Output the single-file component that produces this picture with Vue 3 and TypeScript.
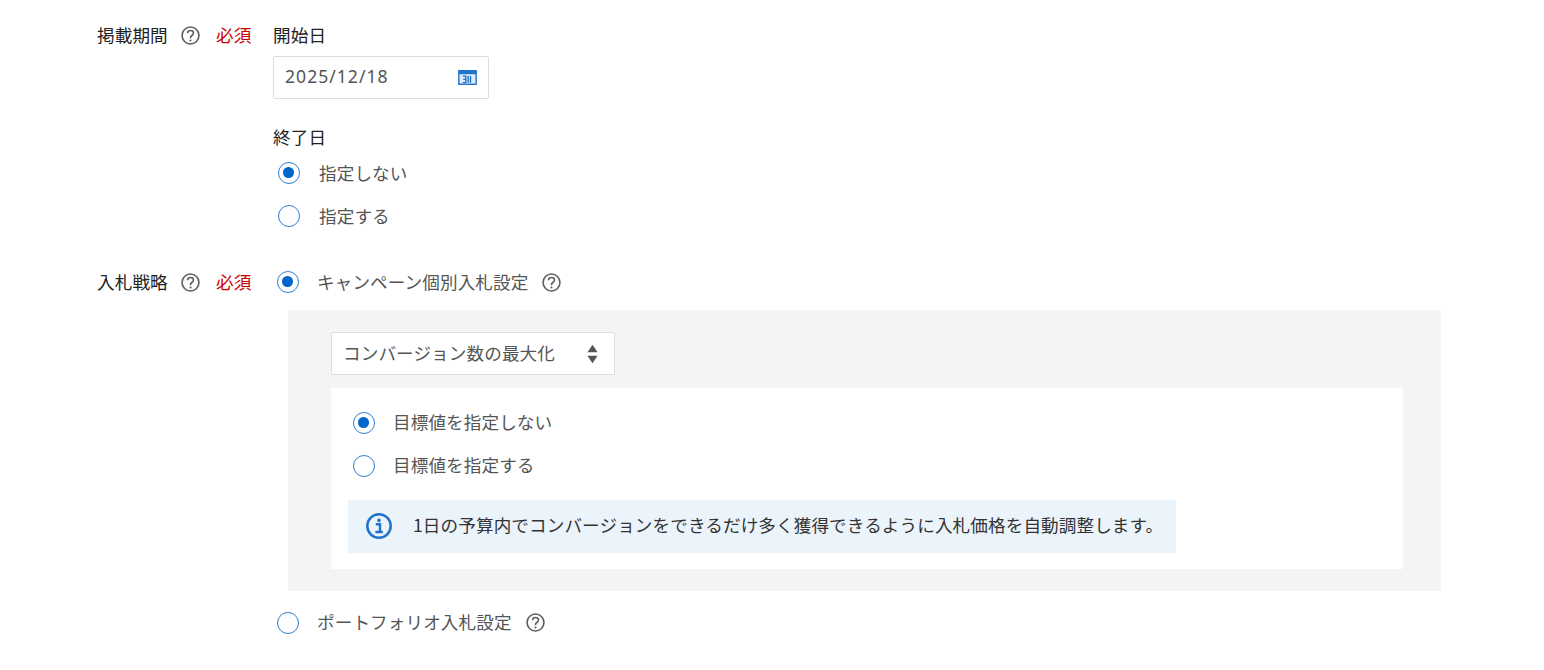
<script setup lang="ts">
const helpPath = 'M6.9 7.7c0-1.9 1.3-3 3.1-3s3.1 1.1 3.1 2.7c0 1.4-.8 2-1.7 2.6-.9.6-1.4 1.2-1.4 2.3v.5'
</script>

<template>
  <div class="page">
    <section class="row first">
      <div class="label">
        <span class="name">掲載期間</span>
        <svg class="help" viewBox="0 0 20 20"><circle cx="10" cy="10" r="8.9" /><path :d="helpPath" /><circle class="dot" cx="10" cy="15.2" r="1.1" /></svg>
        <span class="req">必須</span>
      </div>
      <div class="field">
        <div class="sub">開始日</div>
        <div class="date">
          <span class="date-text">2025/12/18</span>
          <svg class="cal" viewBox="0 0 20 16">
            <rect x="0" y="0" width="20" height="16" fill="#1f73c9" />
            <rect x="1.5" y="4.5" width="17" height="10" fill="#dcebfa" />
            <path d="M5 6.5h3.2v7H5M5.4 10h2.8M10.7 6.5v7M13.2 6.5v7" fill="none" stroke="#1f73c9" stroke-width="1.5" />
          </svg>
        </div>
        <div class="sub end">終了日</div>
        <label class="radio end-radio"><span class="mark on"></span><span class="txt gap31">指定しない</span></label>
        <label class="radio end-radio second"><span class="mark"></span><span class="txt gap31">指定する</span></label>
      </div>
    </section>

    <section class="row strategy">
      <div class="label">
        <span class="name">入札戦略</span>
        <svg class="help" viewBox="0 0 20 20"><circle cx="10" cy="10" r="8.9" /><path :d="helpPath" /><circle class="dot" cx="10" cy="15.2" r="1.1" /></svg>
        <span class="req">必須</span>
      </div>
      <div class="field">
        <label class="radio top">
          <span class="mark on"></span>
          <span class="txt">キャンペーン個別入札設定</span>
          <svg class="help after" viewBox="0 0 20 20"><circle cx="10" cy="10" r="8.9" /><path :d="helpPath" /><circle class="dot" cx="10" cy="15.2" r="1.1" /></svg>
        </label>
        <div class="panel">
          <div class="select">
            <span class="select-text">コンバージョン数の最大化</span>
            <svg class="updown" viewBox="0 0 12 20"><path d="M6 0l5.5 8H.5zM6 20L.5 12h11z" /></svg>
          </div>
          <div class="card">
            <label class="radio inner"><span class="mark on"></span><span class="txt">目標値を指定しない</span></label>
            <label class="radio inner"><span class="mark"></span><span class="txt">目標値を指定する</span></label>
            <div class="info">
              <svg class="info-icon" viewBox="0 0 26 26">
                <circle cx="13" cy="13" r="11.7" fill="none" stroke="#1f73c9" stroke-width="2.5" />
                <circle cx="13" cy="7.4" r="1.8" fill="#1f73c9" />
                <path d="M9.8 11.2h4.2v7.4M9.4 19h7.4" fill="none" stroke="#1f73c9" stroke-width="2.4" />
              </svg>
              <span class="info-text">1日の予算内でコンバージョンをできるだけ多く獲得できるように入札価格を自動調整します。</span>
            </div>
          </div>
        </div>
        <label class="radio bottom">
          <span class="mark"></span>
          <span class="txt">ポートフォリオ入札設定</span>
          <svg class="help after" viewBox="0 0 20 20"><circle cx="10" cy="10" r="8.9" /><path :d="helpPath" /><circle class="dot" cx="10" cy="15.2" r="1.1" /></svg>
        </label>
      </div>
    </section>
  </div>
</template>

<style>
html, body { background: #fff; }
</style>

<style scoped>
.page {
  height: 670px;
  overflow: hidden;
  padding: 23px 0 0 97px;
  box-sizing: border-box;
  font-family: "Noto Sans CJK JP", "Noto Sans", sans-serif;
  font-size: 17.6px;
  line-height: 24px;
  letter-spacing: 0.1px;
  color: #222;
}
.row { display: flex; width: 1344px; }
.strategy { margin-top: 42px; }
.label { display: flex; align-items: flex-start; width: 176px; flex: none; }
.name { width: 84px; flex: none; }
.help {
  width: 19px;
  height: 19px;
  flex: none;
  fill: none;
  stroke: #5f5f5f;
  stroke-width: 1.7;
  margin-top: 3px;
}
.help .dot { fill: #5f5f5f; stroke: none; }
.req { color: #c00; margin-left: 16px; }
.field { flex: 1; min-width: 0; }
.sub { height: 24px; }
.date {
  width: 216px;
  height: 43px;
  margin-top: 9px;
  box-sizing: border-box;
  border: 1px solid #ddd;
  border-radius: 2px;
  padding: 0 11px;
  display: flex;
  align-items: center;
  justify-content: space-between;
  color: #555;
  font-family: "Noto Sans", sans-serif;
  letter-spacing: 1px;
}
.date-text { margin-bottom: 3px; }
.cal { width: 19px; height: 15px; flex: none; }
.sub.end { margin-top: 26px; }
.radio { display: flex; align-items: center; height: 24px; color: #555; }
.end-radio { margin-top: 12px; padding-left: 5px; }
.end-radio.second { margin-top: 19px; }
.mark {
  width: 22px;
  height: 22px;
  box-sizing: border-box;
  border: 1.5px solid #2f80d3;
  border-radius: 50%;
  flex: none;
  position: relative;
  background: #fff;
}
.mark.on::after {
  content: "";
  position: absolute;
  left: 4.2px;
  top: 4.2px;
  width: 10.6px;
  height: 10.6px;
  border-radius: 50%;
  background: #0066cc;
}
.txt { margin-left: 18px; }
.gap31 { margin-left: 19px; }
.top, .bottom { padding-left: 4px; }
.after { margin-left: 14px; margin-top: 0; }
.panel {
  margin: 16px 0 0 15px;
  width: 1153px;
  height: 281px;
  box-sizing: border-box;
  background: #f4f4f4;
  padding: 22px 38px 22px 43px;
}
.select {
  width: 284px;
  height: 43px;
  box-sizing: border-box;
  background: #fff;
  border: 1px solid #ddd;
  border-radius: 2px;
  padding: 0 16px 0 11px;
  display: flex;
  align-items: center;
  justify-content: space-between;
  color: #555;
}
.select-text { margin-bottom: 2px; }
.updown { width: 11px; height: 20px; fill: #555; flex: none; }
.card {
  margin-top: 13px;
  height: 181px;
  background: #fff;
  box-sizing: border-box;
  padding: 23px 17px 0;
}
.inner { padding-left: 5px; }
.inner .txt { margin-bottom: 2px; }
.inner + .inner { margin-top: 19px; }
.info {
  margin-top: 22px;
  width: 828px;
  height: 53px;
  box-sizing: border-box;
  padding-left: 18px;
  background: #ecf4fb;
  display: flex;
  align-items: center;
  color: #333;
}
.info-icon { width: 26px; height: 26px; flex: none; margin: 0 21px 2px 0; }
.info-text { margin-bottom: 3px; }
.bottom { margin-top: 20px; }
.bottom .txt, .bottom .help { margin-bottom: 2px; }
</style>
